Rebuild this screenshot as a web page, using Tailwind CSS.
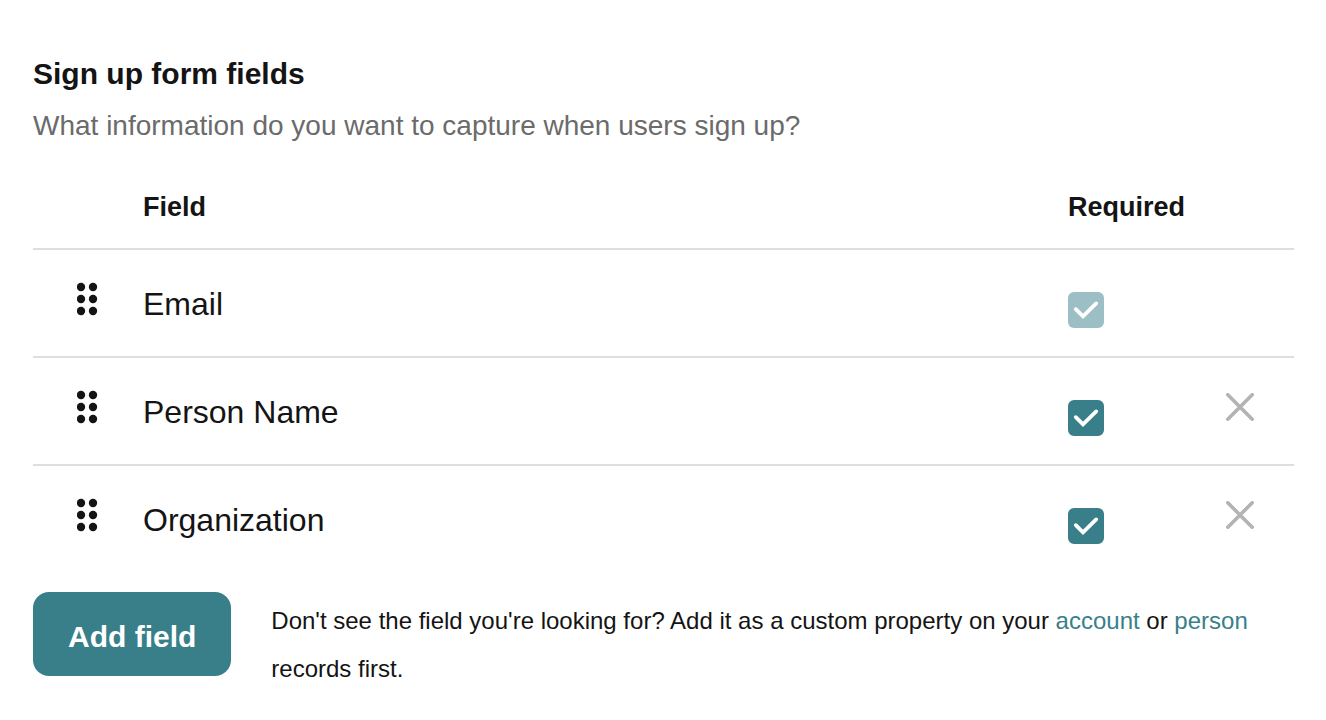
<!DOCTYPE html>
<html lang="en">
<head>
  <meta charset="UTF-8">
  <meta name="viewport" content="width=device-width, initial-scale=1.0">
  <title>Sign up form fields</title>
  <!-- Tailwind CSS CDN -->
  <script src="https://cdn.jsdelivr.net/npm/@tailwindcss/browser@4"></script>
</head>
<body class="bg-white text-[#141414] font-['Liberation_Sans',sans-serif]">

<!-- Shared icons -->
<svg class="hidden">
  <symbol id="grip" viewBox="0 0 22 34">
    <circle cx="4" cy="5" r="4.2"/><circle cx="16" cy="5" r="4.2"/>
    <circle cx="4" cy="17" r="4.2"/><circle cx="16" cy="17" r="4.2"/>
    <circle cx="4" cy="29" r="4.2"/><circle cx="16" cy="29" r="4.2"/>
  </symbol>
  <symbol id="check" viewBox="0 0 36 36">
    <path d="M7.8 17.2 15 24.4 28.2 11.4" fill="none" stroke="currentColor" stroke-width="3.8" stroke-linecap="round"/>
  </symbol>
  <symbol id="cross" viewBox="0 0 28 28">
    <path d="M1.8 1.8l24.4 24.4M26.2 1.8l-24.4 24.4" fill="none" stroke="currentColor" stroke-width="3.6" stroke-linecap="round"/>
  </symbol>
</svg>

<main class="px-8 pt-[54px] pb-6 ml-px">
  <!-- Heading -->
  <h1 class="text-[30px] leading-10 font-bold">Sign up form fields</h1>
  <p class="mt-3 text-[28px] leading-10 text-[#6b6b6b]">What information do you want to capture when users sign up?</p>

  <!-- Fields -->
  <table class="mt-5 w-full table-fixed border-separate border-spacing-0 text-left">
    <thead>
      <tr class="h-[84px] text-[27px] *:border-b-2 *:border-[#dcdee0]">
        <th class="w-[110px]"></th>
        <th>Field</th>
        <th class="w-[118px]">Required</th>
        <th class="w-[108px]"></th>
      </tr>
    </thead>
    <tbody>
      <tr class="h-[108px] align-top *:border-b-2 *:border-[#dcdee0]">
        <td class="pt-8 pl-11">
          <button type="button" aria-label="Move Email" class="block cursor-grab"><svg class="block w-[22px] h-[34px] fill-current overflow-visible"><use href="#grip"/></svg></button>
        </td>
        <td class="pt-[30px] text-[32px] leading-12"><label for="email">Email</label></td>
        <td class="pt-[42px]">
          <span class="relative block size-9">
            <input id="email" type="checkbox" checked disabled class="block size-9 appearance-none rounded-md bg-[#9bbfc5]">
            <svg class="absolute inset-0 size-9 text-white pointer-events-none"><use href="#check"/></svg>
          </span>
        </td>
        <td></td>
      </tr>
      <tr class="h-[108px] align-top *:border-b-2 *:border-[#dcdee0]">
        <td class="pt-8 pl-11">
          <button type="button" aria-label="Move Person Name" class="block cursor-grab"><svg class="block w-[22px] h-[34px] fill-current overflow-visible"><use href="#grip"/></svg></button>
        </td>
        <td class="pt-[30px] text-[32px] leading-12"><label for="name">Person Name</label></td>
        <td class="pt-[42px]">
          <span class="relative block size-9">
            <input id="name" type="checkbox" checked class="peer block size-9 appearance-none rounded-md border-2 border-[#387f8a] checked:bg-[#387f8a]">
            <svg class="absolute inset-0 size-9 hidden peer-checked:block text-white pointer-events-none"><use href="#check"/></svg>
          </span>
        </td>
        <td class="pt-[35px]">
          <button type="button" aria-label="Remove Person Name" class="block mx-auto text-[#b3b3b3]"><svg class="block size-7"><use href="#cross"/></svg></button>
        </td>
      </tr>
      <tr class="h-[106px] align-top">
        <td class="pt-8 pl-11">
          <button type="button" aria-label="Move Organization" class="block cursor-grab"><svg class="block w-[22px] h-[34px] fill-current overflow-visible"><use href="#grip"/></svg></button>
        </td>
        <td class="pt-[30px] text-[32px] leading-12"><label for="organization">Organization</label></td>
        <td class="pt-[42px]">
          <span class="relative block size-9">
            <input id="organization" type="checkbox" checked class="peer block size-9 appearance-none rounded-md border-2 border-[#387f8a] checked:bg-[#387f8a]">
            <svg class="absolute inset-0 size-9 hidden peer-checked:block text-white pointer-events-none"><use href="#check"/></svg>
          </span>
        </td>
        <td class="pt-[35px]">
          <button type="button" aria-label="Remove Organization" class="block mx-auto text-[#b3b3b3]"><svg class="block size-7"><use href="#cross"/></svg></button>
        </td>
      </tr>
    </tbody>
  </table>

  <!-- Add field -->
  <div class="mt-5 flex items-start gap-10">
    <button type="button" class="shrink-0 h-21 px-[35px] pt-1 rounded-2xl bg-[#387f8a] text-white text-[30px] font-bold">Add field</button>
    <p class="pt-[5px] text-[24px] leading-12">Don't see the field you're looking for? Add it as a custom property on your <a href="#" class="text-[#387f8a]">account</a> or <a href="#" class="text-[#387f8a]">person</a> records first.</p>
  </div>
</main>

</body>
</html>
